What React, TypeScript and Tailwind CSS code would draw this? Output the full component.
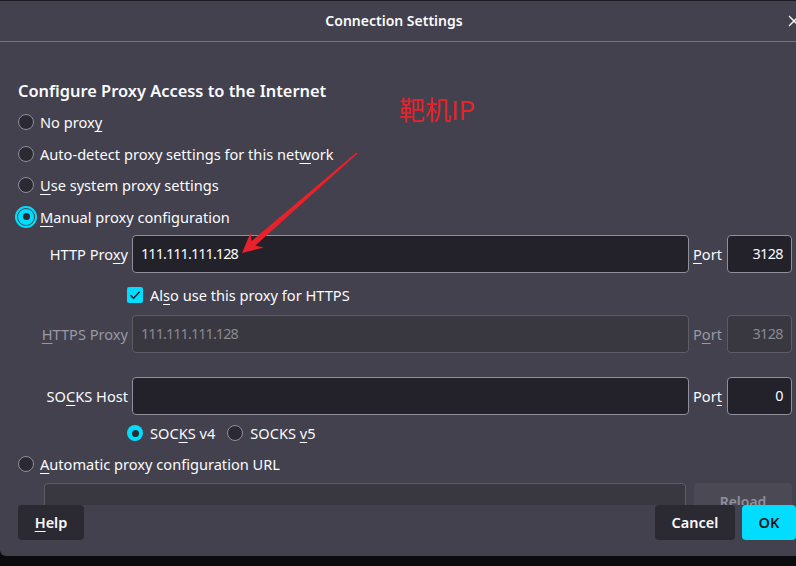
import React from "react";

const U = ({ children }: { children: React.ReactNode }) => (
  <span className="underline underline-offset-[3px] decoration-1">{children}</span>
);

function Radio({ checked, focus }: { checked?: boolean; focus?: boolean }) {
  if (checked) {
    return (
      <span
        className={
          "flex w-4 h-4 shrink-0 items-center justify-center rounded-full bg-[#00ddff] " +
          (focus ? "outline-2 outline-[#00ddff] outline-offset-1" : "")
        }
      >
        <span className="w-[7px] h-[7px] rounded-full bg-[#2b2a33]" />
      </span>
    );
  }
  return <span className="block w-4 h-4 shrink-0 rounded-full bg-[#2b2a33] border border-[#8f8f9d]" />;
}

function ProxyRow({
  label,
  value,
  port,
  portLabel,
  disabled,
  className,
}: {
  label: React.ReactNode;
  value: string;
  port: string;
  portLabel: React.ReactNode;
  disabled?: boolean;
  className?: string;
}) {
  const inputCls = disabled
    ? "bg-[#393840] border-[#5e5d66] text-[#8a8991]"
    : "bg-[#23222b] border-[#8f8f9d] text-[#fbfbfe]";
  const labelCls = disabled ? "text-[#9a99a3]" : "text-[#fbfbfe]";
  return (
    <div className={"flex items-center h-[38px] " + (className || "")}>
      <div className={"w-[114px] shrink-0 pr-[4px] text-right " + labelCls}>{label}</div>
      <div
        className={
          "flex-1 h-full flex items-center rounded-[4px] border pl-[8px] text-[14.4px] tracking-[-0.9px] " + inputCls
        }
      >
        {value}
      </div>
      <div className={"w-[38px] shrink-0 pl-[4px] " + labelCls}>{portLabel}</div>
      <div
        className={
          "w-[65px] h-full shrink-0 flex items-center justify-end rounded-[4px] border pr-[8px] text-[14.4px] tracking-[-0.6px] " +
          inputCls
        }
      >
        {port}
      </div>
    </div>
  );
}

export default function App() {
  return (
    <div
      className="w-[796px] h-[566px] overflow-hidden bg-[#0c0c0e] relative text-[#fbfbfe] text-[14.6px]"
      style={{ fontFamily: '"Noto Sans", "Noto Sans CJK SC", sans-serif' }}
    >
      <div className="h-[1px] bg-[#1c1b22]" />
      <div className="w-[810px] h-[555px] bg-[#42414d] rounded-b-[6px] flex flex-col">
        <div className="h-[40px] shrink-0 grid grid-cols-[1fr_auto_1fr] items-center">
          <div />
          <div className="text-[14px] font-semibold translate-x-[-11px] -translate-y-[1px]">Connection Settings</div>
          <div className="flex justify-end pr-[10px]">
            <svg width="12" height="12" viewBox="0 0 12 12">
              <path d="M1 1 L11 11 M11 1 L1 11" stroke="#fbfbfe" strokeWidth="1.4" />
            </svg>
          </div>
        </div>
        <div className="h-[1px] bg-[#75747d] shrink-0" />
        <div className="flex-1 overflow-hidden px-[18px] pt-[39px] leading-[20px]">
          <div className="text-[16.4px] font-semibold h-[20px]">Configure Proxy Access to the Internet</div>
          <div className="mt-[5.5px]">
            <div className="h-[31.5px] flex items-center gap-[6px]">
              <Radio />
              <span>No prox<U>y</U></span>
            </div>
            <div className="h-[31.5px] flex items-center gap-[6px]">
              <Radio />
              <span>Auto-detect proxy settings for this net<U>w</U>ork</span>
            </div>
            <div className="h-[31.5px] flex items-center gap-[6px]">
              <Radio />
              <span><U>U</U>se system proxy settings</span>
            </div>
            <div className="h-[31.5px] flex items-center gap-[6px]">
              <Radio checked focus />
              <span><U>M</U>anual proxy configuration</span>
            </div>
          </div>
          <ProxyRow
            className="mt-[2.5px]"
            label={<>HTTP Pro<U>x</U>y</>}
            value="111.111.111.128"
            portLabel={<><U>P</U>ort</>}
            port="3128"
          />
          <div className="mt-[7px] h-[30px] flex items-center gap-[7px] pl-[109px]">
            <span className="w-4 h-4 rounded-[2px] bg-[#00ddff] flex items-center justify-center">
              <svg width="12" height="12" viewBox="0 0 12 12">
                <path d="M1.5 6.2 L4.6 9.2 L10.6 2.8" fill="none" stroke="#1c1b22" strokeWidth="1.5" />
              </svg>
            </span>
            <span>Al<U>s</U>o use this proxy for HTTPS</span>
          </div>
          <ProxyRow
            className="mt-[5px]"
            disabled
            label={<><U>H</U>TTPS Proxy</>}
            value="111.111.111.128"
            portLabel={<>P<U>o</U>rt</>}
            port="3128"
          />
          <ProxyRow
            className="mt-[24px]"
            label={<>SO<U>C</U>KS Host</>}
            value=""
            portLabel={<>Por<U>t</U></>}
            port="0"
          />
          <div className="mt-[3px] h-[30px] flex items-center pl-[109px]">
            <Radio checked />
            <span className="ml-[7px]">SOC<U>K</U>S v4</span>
            <span className="ml-[12px]"><Radio /></span>
            <span className="ml-[7px]">SOCKS <U>v</U>5</span>
          </div>
          <div className="mt-[1px] h-[30px] flex items-center gap-[6px]">
            <Radio />
            <span><U>A</U>utomatic proxy configuration URL</span>
          </div>
          <div className="mt-[4px] flex items-stretch h-[38px] pl-[26px]">
            <div className="flex-1 rounded-[4px] border border-[#5e5d66] bg-[#393840]" />
            <div className="ml-[8px] w-[98px] rounded-[4px] bg-[#4b4a54] text-[#8f8f9d] font-semibold text-[14px] flex items-center justify-center">
              Reload
            </div>
          </div>
        </div>
        <div className="h-[51px] shrink-0 flex items-start justify-between pl-[18px] pr-[14px]">
          <div className="h-[35px] w-[66px] rounded-[4px] bg-[#2b2a33] flex items-center justify-center text-[14.5px] font-semibold">
            <span><U>H</U>elp</span>
          </div>
          <div className="flex gap-[7px]">
            <div className="h-[35px] w-[80px] rounded-[4px] bg-[#2b2a33] flex items-center justify-center text-[14.5px] font-semibold">
              Cancel
            </div>
            <div className="h-[35px] w-[54px] rounded-[4px] bg-[#00ddff] text-[#15141a] flex items-center justify-center text-[14.5px] font-semibold">
              OK
            </div>
          </div>
        </div>
      </div>

      <div
        className="absolute left-[399px] top-[94px] text-[26px] leading-[30px] text-[#e8212b]"
        style={{ fontFamily: '"Noto Sans CJK SC", "Noto Sans", sans-serif' }}
      >
        靶机IP
      </div>
      <svg className="absolute left-0 top-0 pointer-events-none" width="796" height="566">
        <polygon
          points="242,253 263.7,247.6 255.4,245.6 357.6,153.6 356.4,152.4 251.5,241 250.7,232.4"
          fill="#e8212b"
        />
      </svg>
    </div>
  );
}
